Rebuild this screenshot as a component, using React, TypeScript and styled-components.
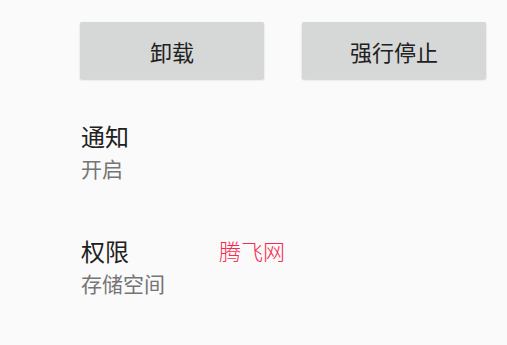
import styled, { createGlobalStyle } from 'styled-components';

const GlobalStyle = createGlobalStyle`
	html, body {
		margin: 0;
		padding: 0;
		background: #fafafa;
		font-family: 'Noto Sans CJK SC', 'Noto Sans', sans-serif;
	}
`;

const Page = styled.div`
	position: relative;
	width: 507px;
	height: 345px;
	background: #fafafa;
	overflow: hidden;
`;

const ButtonRow = styled.div`
	display: flex;
	gap: 38px;
	padding: 22px 0 0 80px;
`;

const ActionButton = styled.button`
	width: 184px;
	height: 57px;
	border: none;
	border-radius: 2px;
	background: #d6d7d7;
	box-shadow: 0 1px 2px rgba(0, 0, 0, 0.18);
	color: #212121;
	font-family: inherit;
	font-size: 22px;
	padding: 0;
	cursor: pointer;
`;

const ItemList = styled.div`
	display: flex;
	flex-direction: column;
	gap: 53px;
	margin-top: 41px;
	padding-left: 81px;
`;

const Item = styled.div`
	display: flex;
	flex-direction: column;
	gap: 3px;
`;

const Title = styled.div`
	font-size: 24px;
	line-height: 31px;
	color: #212121;
`;

const Summary = styled.div`
	font-size: 21px;
	line-height: 28px;
	color: #757575;
`;

const Watermark = styled.span`
	position: absolute;
	left: 219px;
	top: 237px;
	font-size: 22px;
	line-height: 26px;
	font-weight: 300;
	color: #f52a4f;
`;

const items = [
	{ title: '通知', summary: '开启' },
	{ title: '权限', summary: '存储空间' },
];

export default function App() {
	return (
		<Page>
			<GlobalStyle />
			<ButtonRow>
				<ActionButton>卸载</ActionButton>
				<ActionButton>强行停止</ActionButton>
			</ButtonRow>
			<ItemList>
				{items.map((item) => (
					<Item key={item.title}>
						<Title>{item.title}</Title>
						<Summary>{item.summary}</Summary>
					</Item>
				))}
			</ItemList>
			<Watermark>腾飞网</Watermark>
		</Page>
	);
}
